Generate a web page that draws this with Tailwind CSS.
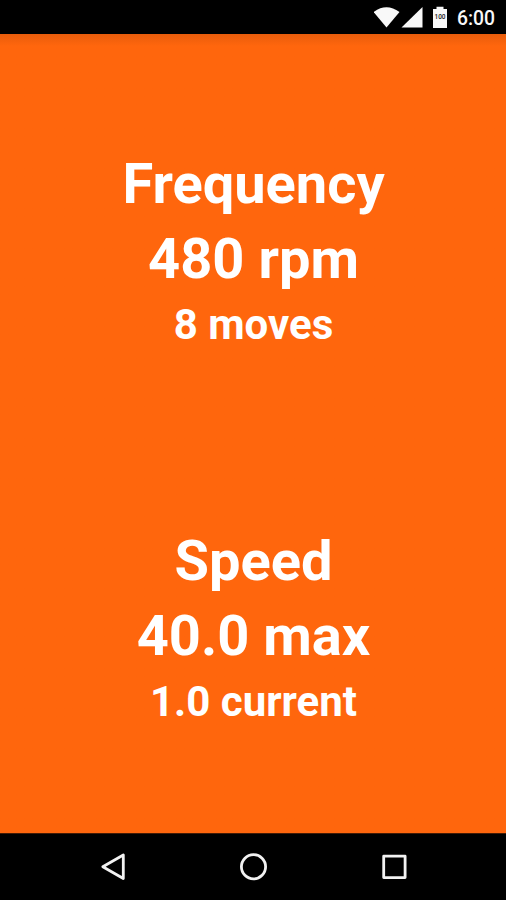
<!DOCTYPE html>
<html lang="en"><head><meta charset="utf-8"><title>Frequency and speed</title><script src="https://cdn.jsdelivr.net/npm/@tailwindcss/browser@4"></script></head>
<body class="w-[506px] h-[900px] overflow-hidden flex flex-col bg-[#ff660d] text-white font-['Roboto',sans-serif]">
<header class="h-[34px] shrink-0 bg-black flex items-center justify-end">
<svg class="w-[132px] h-[34px]" viewBox="374 0 132 34" fill="#f8f8f8"><path d="M373.500 12Q386.500 2.500 399.500 12L386.500 27.500Z"/><path d="M422.500 7V27.500H401.500Z"/><path d="M433 9h3.500V6.700h7V9h3.500v19h-14Z"/><text x="440" y="19.200" font-size="6.500" font-weight="500" text-anchor="middle" fill="#222" textLength="11">100</text><text x="457" y="25" font-size="20" font-weight="500" textLength="38" lengthAdjust="spacingAndGlyphs">6:00</text></svg>
</header>
<main class="h-[799px] shrink-0 pl-px flex flex-col items-center text-center font-bold whitespace-nowrap bg-linear-to-b from-[#e85c0b] to-[#ff660d] to-[12px]">
<section class="pt-[113px] h-[377px]"><h1 class="text-[56px] leading-[75px]">Frequency</h1><p class="text-[56px] leading-[75px]">480 rpm</p><p class="text-[42px] leading-[56px]">8 moves</p></section>
<section class="pt-[113px]"><h1 class="text-[56px] leading-[75px]">Speed</h1><p class="text-[56px] leading-[75px]">40.0 max</p><p class="text-[42px] leading-[56px]">1.0 current</p></section>
</main>
<nav class="flex-1 bg-black border-t border-[#421b05]"><svg class="w-[506px] h-[66px]" viewBox="0 834 506 66" fill="none" stroke="#f2f2f2" stroke-width="2.800" stroke-linejoin="round"><path d="M123.300 855V878.500L102.800 866.700Z"/><circle cx="253.500" cy="866.700" r="12.100"/><rect x="383.700" y="856.200" width="21.400" height="21.400"/></svg></nav>
</body></html>
